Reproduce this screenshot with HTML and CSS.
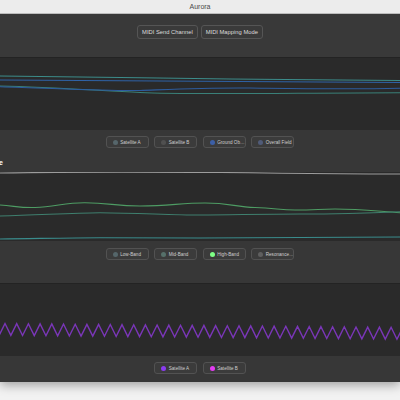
FILE: index.html
```html
<!DOCTYPE html>
<html lang="en">
<head>
    <meta charset="UTF-8">
    <meta name="viewport" content="width=device-width, initial-scale=1.0">
    <title>Aurora</title>
    <link rel="stylesheet" href="styles.css">
</head>
<body>
    <div class="window">
        <div class="titlebar">Aurora</div>

        <!-- Toolbar -->
        <div class="toolbar">
            <button class="tool-btn">MIDI Send Channel</button>
            <button class="tool-btn">MIDI Mapping Mode</button>
        </div>

        <!-- Orbit panel -->
        <div class="chart chart-orbit">
            <svg viewBox="0 0 400 72" preserveAspectRatio="none">
                <path d="M0 18 C 90 19, 150 20, 230 21 S 340 22, 400 22.5" stroke="#3c8c8a" />
                <path d="M0 22 C 120 23, 260 23.5, 400 24.5" stroke="#2f62a6" />
                <path d="M0 28 C 50 29, 90 32, 140 34.5 S 300 34.7, 400 34.7" stroke="#3a8078" />
                <path d="M0 28.7 C 50 30, 100 33, 140 32.5 C 180 31, 210 29.5, 250 30 S 340 31.5, 400 30.3" stroke="#2d5c9e" />
            </svg>
        </div>
        <div class="legend legend-orbit">
            <button class="legend-btn"><span class="dot dot-sat-a"></span>Satellite A</button>
            <button class="legend-btn"><span class="dot dot-sat-b"></span>Satellite B</button>
            <button class="legend-btn"><span class="dot dot-ground"></span>Ground Ob…</button>
            <button class="legend-btn"><span class="dot dot-overall"></span>Overall Field</button>
        </div>

        <!-- Spectrum panel -->
        <div class="panel-header">
            <h3 class="panel-title">Spectral Profile</h3>
        </div>
        <div class="chart chart-spectrum">
            <svg viewBox="0 0 400 69" preserveAspectRatio="none">
                <path d="M0 1 C 60 0, 150 0, 220 0.5 S 300 2, 400 2" stroke="#9c9c9c" />
                <path d="M0 33 C 15 34, 20 36, 35 35.5 C 55 35, 65 30.5, 85 30.7 C 110 31, 115 34, 140 34 C 170 34, 180 31, 205 31 C 230 31, 235 35, 255 35.5 C 275 36, 280 38, 295 38 C 315 38, 320 37, 335 37 C 360 37, 380 39.5, 400 40.7" stroke="#4e9c64" />
                <path d="M0 44 C 40 43, 70 41, 100 40.7 C 140 41, 170 43, 200 43 S 260 42, 300 42 S 370 41, 400 39.7" stroke="#3f7f6e" />
                <path d="M0 67 C 40 66.5, 70 65.7, 100 65.7 S 160 66, 200 66 S 320 65.2, 400 65" stroke="#3a8c8c" />
            </svg>
        </div>
        <div class="legend legend-spectrum">
            <button class="legend-btn"><span class="dot dot-low"></span>Low-Band</button>
            <button class="legend-btn"><span class="dot dot-mid"></span>Mid-Band</button>
            <button class="legend-btn"><span class="dot dot-high"></span>High-Band</button>
            <button class="legend-btn"><span class="dot dot-res"></span>Resonance…</button>
        </div>

        <!-- Oscillation panel -->
        <div class="chart chart-wave">
            <svg viewBox="0 0 400 73" preserveAspectRatio="none">
                <polyline fill="none" stroke="#7a36b8" stroke-width="1.4" points="-0.85,52 5,40.05 10.85,52.1 16.7,40.2 22.55,52.2 28.4,40.3 34.25,52.3 40.1,40.4 45.95,52.5 51.8,40.5 57.65,52.6 63.5,40.6 69.35,52.7 75.2,40.8 81.05,52.8 86.9,40.9 92.75,52.9 98.6,41 104.45,53 110.3,41.1 116.15,53.2 122,41.2 127.85,53.3 133.7,41.3 139.55,53.4 145.4,41.5 151.25,53.5 157.1,41.6 162.95,53.6 168.8,41.7 174.65,53.7 180.5,41.8 186.35,53.9 192.2,41.9 198.05,54 203.9,42 209.75,54.1 215.6,42.2 221.45,54.2 227.3,42.3 233.15,54.3 239,42.4 244.85,54.4 250.7,42.5 256.55,54.6 262.4,42.6 268.25,54.7 274.1,42.7 279.95,54.8 285.8,42.9 291.65,54.9 297.5,43 303.35,55 309.2,43.1 315.05,55.2 320.9,43.2 326.75,55.3 332.6,43.3 338.45,55.4 344.3,43.4 350.15,55.5 356,43.6 361.85,55.6 367.7,43.7 373.55,55.7 379.4,43.8 385.25,55.9 391.1,43.9 396.95,56 402.8,44" />
            </svg>
        </div>
        <div class="legend legend-wave">
            <button class="legend-btn"><span class="dot dot-wave-a"></span>Satellite A</button>
            <button class="legend-btn"><span class="dot dot-wave-b"></span>Satellite B</button>
        </div>
    </div>
</body>
</html>
```

FILE: styles.css
```css
body {
    margin: 0;
    padding: 0;
    background: #f2f2f2;
    font-family: "Liberation Sans", Arial, sans-serif;
    height: 400px;
    overflow: hidden;
}

.window {
    width: 400px;
    overflow: hidden;
    background: #373737;
    box-shadow: 0 3px 10px rgba(0, 0, 0, 0.35);
}

.titlebar {
    height: 13px;
    line-height: 13px;
    background: #ececec;
    border-bottom: 1px solid #bdbdbd;
    color: #4a4a4a;
    font-size: 7px;
    text-align: center;
}

.toolbar {
    height: 43px;
    box-sizing: border-box;
    display: flex;
    justify-content: center;
    align-items: flex-start;
    gap: 3px;
    padding-top: 11px;
    background: #393939;
}

.tool-btn {
    height: 14px;
    padding: 0 4px;
    background: #3a3a3a;
    border: 1px solid #555;
    border-radius: 3px;
    color: #dcdcdc;
    font-family: inherit;
    font-size: 5.8px;
    line-height: 12px;
}

.chart {
    background: #2a2a2a;
    border-top: 1px solid #232323;
    box-sizing: border-box;
}

.chart svg {
    display: block;
    width: 400px;
    height: 100%;
}

.chart path {
    fill: none;
    stroke-width: 1.1;
}

.chart-orbit {
    height: 73px;
}

.chart-spectrum {
    height: 69px;
    border-top: none;
}

.chart-wave {
    height: 73px;
}

.legend {
    display: flex;
    justify-content: center;
    align-items: flex-start;
    gap: 5.5px;
    box-sizing: border-box;
    background: #373737;
}

.legend-orbit {
    height: 22px;
    padding-top: 6px;
}

.legend-spectrum {
    height: 42px;
    padding-top: 7px;
}

.legend-wave {
    height: 26px;
    padding-top: 6px;
}

.legend-btn {
    width: 43px;
    height: 12px;
    box-sizing: border-box;
    display: flex;
    align-items: center;
    gap: 2.5px;
    padding: 0 0 0 6px;
    background: #3b3b3b;
    border: 1px solid #525252;
    border-radius: 3px;
    color: #cfcfcf;
    font-family: inherit;
    font-size: 4.6px;
    white-space: nowrap;
    overflow: hidden;
}

.dot {
    width: 5px;
    height: 5px;
    border-radius: 50%;
    flex-shrink: 0;
}

.dot-sat-a { background: #56666b; }
.dot-sat-b { background: #505050; }
.dot-ground { background: #3c5fa6; }
.dot-overall { background: #505b78; }
.dot-low { background: #55666a; }
.dot-mid { background: #56706a; }
.dot-high { background: #7dff86; }
.dot-res { background: #5f5f5f; }
.dot-wave-a { background: #8a3cf0; }
.dot-wave-b { background: #e43cf2; }

.panel-header {
    height: 20px;
    display: flex;
    align-items: center;
    background: #373737;
}

.panel-title {
    margin: 0 0 0 -200px;
    width: 203px;
    flex-shrink: 0;
    text-align: right;
    white-space: nowrap;
    color: #ffffff;
    font-size: 7px;
    font-weight: bold;
}
```
